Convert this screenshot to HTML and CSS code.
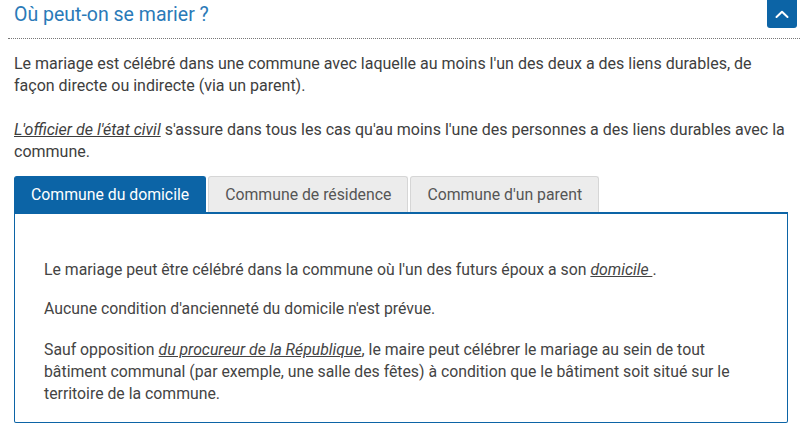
FILE: index.html
```html
<!DOCTYPE html>
<html lang="fr">
<head>
<meta charset="utf-8">
<title>Où peut-on se marier ?</title>
<link rel="stylesheet" href="styles.css">
</head>
<body>
<section class="section">
  <header class="head">
    <h2 class="title">Où peut-on se marier ?</h2>
    <button class="toggle" aria-label="Replier">
      <svg width="14" height="10" viewBox="0 0 14 10"><polyline points="1.5,8 7,2.8 12.5,8" fill="none" stroke="#fff" stroke-width="2" stroke-linecap="round" stroke-linejoin="round"/></svg>
    </button>
  </header>
  <div class="body">
    <p>Le mariage est célébré dans une commune avec laquelle au moins l'un des deux a des liens durables, de <span class="nw">façon directe</span> ou indirecte (via un parent).</p>
    <p><a class="def" href="#">L'officier de l'état civil</a> s'assure dans tous les cas qu'au moins l'une des personnes a des liens durables avec la commune.</p>
    <div class="tabs">
      <div class="tab active">Commune du domicile</div>
      <div class="tab">Commune de résidence</div>
      <div class="tab">Commune d'un parent</div>
    </div>
    <div class="panel">
      <p>Le mariage peut être célébré dans la commune où l'un des futurs époux a son <a class="def" href="#">domicile </a>.</p>
      <p>Aucune condition d'ancienneté du domicile n'est prévue.</p>
      <p>Sauf opposition <a class="def" href="#">du procureur de la République</a>, le maire peut célébrer le mariage au sein de tout bâtiment communal (par exemple, une salle des fêtes) à condition que le bâtiment soit situé sur le territoire de la commune.</p>
    </div>
  </div>
</section>
</body>
</html>
```

FILE: styles.css
```css
* { box-sizing: border-box; }
html, body { margin: 0; padding: 0; background: #fff; }
body {
  font-family: Roboto, "Noto Sans", "Liberation Sans", sans-serif;
  color: #3e3e3e;
  font-size: 15.8px;
  line-height: 22px;
}
.section { padding: 0 8px; }
.head {
  display: flex;
  justify-content: space-between;
  align-items: flex-start;
  height: 39px;
  border-bottom: 1px dotted #777;
}
.title {
  margin: 0 0 0 6px;
  padding-top: 3px;
  font-size: 19.5px;
  line-height: 24px;
  font-weight: 400;
  color: #2a7ab8;
}
.toggle {
  width: 30px;
  height: 28px;
  margin-right: 3px;
  border: 0;
  padding: 0;
  background: #0c64a6;
  border-radius: 0 0 3px 3px;
  display: flex;
  align-items: center;
  justify-content: center;
}
.body { padding: 14px 6px 0 6px; }
.body > p { margin: 0 0 22px; font-size: 16px; }
.body > p:nth-of-type(2) { margin-bottom: 13px; }
.nw { white-space: nowrap; }
a.def { color: #3e3e3e; font-style: italic; text-decoration: underline; }
.tabs {
  display: flex;
  gap: 2px;
  align-items: flex-end;
}
.tab {
  height: 36px;
  padding: 0 16px;
  display: flex;
  align-items: center;
  background: #ececec;
  border: 1px solid #d6d6d6;
  border-bottom: 0;
  border-radius: 3px 3px 0 0;
  color: #555;
}
.tab.active {
  background: #0c64a6;
  border-color: #0c64a6;
  color: #fff;
}
.panel {
  border: 1px solid #0c64a6;
  border-top-width: 2px;
  border-radius: 0 0 2px 2px;
  margin-right: 6px;
  padding: 45px 29px 17px 29px;
  color: #444;
}
.panel a.def { color: #444; }
.panel p { margin: 0 0 17px; }
.panel p:nth-child(2) { margin-bottom: 19px; }
.panel p:last-child { margin-bottom: 0; }
```
